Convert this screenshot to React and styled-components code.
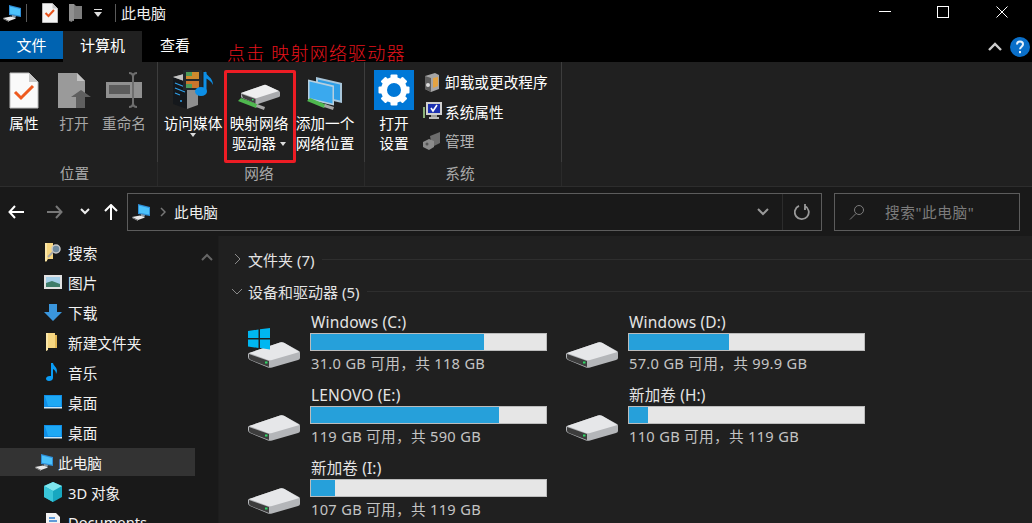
import React from 'react';
import styled, { createGlobalStyle } from 'styled-components';

const GlobalStyle = createGlobalStyle`
  html, body { margin: 0; padding: 0; background: #000; }
  body { font-family: "Noto Sans", "Noto Sans CJK SC", sans-serif; font-size: 14.67px; color: #fff; }
`;

const Window = styled.div`
  position: relative;
  width: 1032px;
  height: 523px;
  overflow: hidden;
  display: flex;
  flex-direction: column;
  background: #000;
`;

const TitleBar = styled.div`
  height: 31px;
  display: flex;
  align-items: flex-start;
  flex: none;
`;

const QuickAccess = styled.div`
  display: flex;
  align-items: center;
  height: 26px;
  padding-left: 2px;
`;

const QuickSep = styled.div`
  width: 1px;
  height: 18px;
  background: #5a5a5a;
  margin: 0 ${p => p.$right}px 0 ${p => p.$left}px;
`;

const QuickSlot = styled.div`
  display: flex;
  margin-right: ${p => p.$right}px;
`;

const WindowTitle = styled.div`
  margin-left: 5px;
  font-size: 15px;
  line-height: 26px;
  color: #eee;
`;

const WindowButtons = styled.div`
  margin-left: auto;
  display: flex;
  padding-right: 1px;
`;

const WindowButton = styled.div`
  width: 58.5px;
  height: 23px;
  display: flex;
  align-items: center;
  justify-content: center;
`;

const TabBar = styled.div`
  height: 31px;
  display: flex;
  flex: none;
  align-items: flex-start;
`;

const FileTab = styled.div`
  width: 63px;
  height: 28px;
  background: #0063b1;
  text-align: center;
  line-height: 28px;
  font-size: 15px;
`;

const Tab = styled.div`
  width: ${p => p.$width}px;
  height: 31px;
  line-height: 29px;
  text-align: center;
  font-size: 15px;
  background: ${p => (p.$active ? '#202020' : 'transparent')};
`;

const TabTools = styled.div`
  margin-left: auto;
  display: flex;
  align-items: center;
  gap: 8px;
  height: 31px;
  padding-right: 2px;
`;

const Ribbon = styled.div`
  height: 124px;
  flex: none;
  display: flex;
  background: #202020;
  border-bottom: 1px solid #2d2d2d;
`;

const RibbonGroup = styled.div`
  width: ${p => p.$width}px;
  display: flex;
  flex-direction: column;
`;

const GroupBody = styled.div`
  height: 100px;
  box-sizing: border-box;
  padding: 8px 0 0 ${p => p.$left}px;
  display: flex;
  gap: ${p => p.$gap}px;
  border-right: 1px solid #3d3d3d;
`;

const GroupLabel = styled.div`
  flex: 1;
  text-align: center;
  font-size: 14.67px;
  line-height: 22px;
  color: #a8a8a8;
  padding-right: ${p => p.$shift}px;
  border-right: 1px solid #2a2a2a;
`;

const BigButton = styled.div`
  width: ${p => p.$width}px;
  display: flex;
  flex-direction: column;
  align-items: center;
  color: ${p => (p.$dim ? '#a6a6a6' : '#fff')};
  line-height: 20px;
  white-space: nowrap;
`;

const IconSlot = styled.div`
  height: 40px;
  flex: none;
  display: flex;
  justify-content: center;
  align-items: ${p => (p.$bottom ? 'flex-end' : 'center')};
`;

const BigLabel = styled.div`
  margin-top: 3px;
  text-align: center;
  font-size: 14.67px;
`;

const Caret = styled.span`
  display: ${p => (p.$block ? 'block' : 'inline-block')};
  width: 0;
  height: 0;
  margin: ${p => (p.$block ? '0 auto' : '0 0 3px 4px')};
  border-left: 3.5px solid transparent;
  border-right: 3.5px solid transparent;
  border-top: 4px solid #ddd;
`;

const SmallColumn = styled.div`
  display: flex;
  flex-direction: column;
  margin-top: -3px;
  margin-left: 9px;
`;

const SmallItem = styled.div`
  height: 29.5px;
  display: flex;
  align-items: center;
  font-size: 14.67px;
  white-space: nowrap;
  color: ${p => (p.$dim ? '#b4b4b4' : '#fff')};
`;

const SmallIcon = styled.div`
  width: 22px;
  display: flex;
  flex: none;
`;

const NavBar = styled.div`
  height: 49px;
  flex: none;
  display: flex;
  align-items: center;
  background: #191919;
`;

const NavButton = styled.div`
  width: ${p => p.$width}px;
  margin: 0 ${p => p.$right || 0}px 0 ${p => p.$left || 0}px;
  display: flex;
  justify-content: center;
`;

const AddressBar = styled.div`
  width: 695px;
  height: 38px;
  box-sizing: border-box;
  border: 1px solid #5c5c5c;
  display: flex;
  align-items: center;
  padding-left: 3px;
  background: #191919;
`;

const AddressChevron = styled.div`
  display: flex;
  margin-left: 9px;
`;

const AddressText = styled.div`
  margin-left: 8px;
  font-size: 14.67px;
  color: #eee;
`;

const AddressDrop = styled.div`
  margin-left: auto;
  width: 38px;
  height: 100%;
  display: flex;
  align-items: center;
  justify-content: center;
  border-right: 1px solid #2c2c2c;
`;

const AddressRefresh = styled.div`
  width: 38px;
  display: flex;
  justify-content: center;
`;

const SearchBox = styled.div`
  width: 186px;
  height: 38px;
  margin-left: 12px;
  box-sizing: border-box;
  border: 1px solid #5c5c5c;
  display: flex;
  align-items: center;
  padding-left: 14px;
  gap: 20px;
  color: #7c7c7c;
  font-size: 14.67px;
  letter-spacing: 0.6px;
`;

const Body = styled.div`
  flex: 1;
  min-height: 0;
  display: flex;
  overflow: hidden;
`;

const Sidebar = styled.div`
  width: 218px;
  flex: none;
  background: #191919;
  display: flex;
  border-right: 1px solid #1d1d1d;
`;

const TreeList = styled.div`
  width: 195px;
  padding-top: 2px;
  display: flex;
  flex-direction: column;
  gap: 2px;
`;

const TreeRow = styled.div`
  height: 28px;
  flex: none;
  display: flex;
  align-items: center;
  gap: ${p => (p.$top ? 4 : 5)}px;
  padding-left: ${p => (p.$top ? 34 : 43)}px;
  background: ${p => (p.$selected ? '#333333' : 'transparent')};
  font-size: 14.67px;
  color: #f2f2f2;
  white-space: nowrap;
  svg { flex: none; }
`;

const ScrollGutter = styled.div`
  flex: 1;
  padding: 9px 0 0 6px;
`;

const Content = styled.div`
  flex: 1;
  background: #202020;
  padding: 7px 0 0 11px;
`;

const SectionHeader = styled.div`
  height: 32px;
  display: flex;
  align-items: center;
  gap: 4px;
  color: #e4e4e4;
  font-size: 15px;
  white-space: nowrap;
`;

const SectionToggle = styled.div`
  width: 14px;
  display: flex;
  justify-content: center;
`;

const SectionRule = styled.div`
  flex: 1;
  height: 1px;
  background: #2e2e2e;
  margin-left: 4px;
`;

const DriveGrid = styled.div`
  margin-left: 18px;
  margin-top: 2px;
  display: grid;
  grid-template-columns: 318px 318px;
  row-gap: 8px;
`;

const DriveTile = styled.div`
  height: 65px;
  display: flex;
  gap: 10px;
  svg { margin-top: 17px; flex: none; }
`;

const DriveInfo = styled.div`
  width: 237px;
`;

const DriveName = styled.div`
  height: 24px;
  line-height: 26px;
  padding-left: 1px;
  color: #e4e4e4;
  font-size: 15.5px;
  letter-spacing: 0.15px;
`;

const UsageBar = styled.div`
  height: 18px;
  box-sizing: border-box;
  border: 1px solid #bcbcbc;
  background: #e6e6e6;
`;

const UsageFill = styled.div`
  height: 100%;
  background: #26a0da;
`;

const DriveSize = styled.div`
  height: 23px;
  line-height: 25px;
  padding-left: 1px;
  color: #c4c4c4;
  font-size: 14.67px;
  letter-spacing: 0.3px;
  white-space: nowrap;
`;

const Callout = styled.div`
  position: absolute;
  left: 227px;
  top: 41px;
  font-size: 18px;
  line-height: 24px;
  letter-spacing: 1.2px;
  color: #e5131c;
  white-space: nowrap;
  font-weight: 300;
`;

const Highlight = styled.div`
  position: absolute;
  left: 224px;
  top: 70px;
  width: 72px;
  height: 93px;
  box-sizing: border-box;
  border: 3px solid #ed1c24;
  border-radius: 2px;
`;

const Chevron = ({ d = 'M1 1l5 5 5-5', color = '#ddd', w = 12, h = 7, sw = 2 }) => (
  <svg width={w} height={h} viewBox={`0 0 ${w} ${h}`}>
    <path d={d} fill="none" stroke={color} strokeWidth={sw} />
  </svg>
);

const ComputerIcon = ({ size = 20 }) => (
  <svg width={size} height={size} viewBox="0 0 20 20">
    <path d="M7 2l12 3v9L7 12z" fill="#2f8fd8" />
    <path d="M8 3.500l10 2.500v6.600L8 10.800z" fill="#4cc2fb" />
    <path d="M10 12l4 1-1 3-3-1z" fill="#8a9aa6" />
    <path d="M1 15l8-1.500 5 2L7 18z" fill="#e8e8e8" />
    <path d="M1 15.200L7 18v1L1 16z" fill="#9a9a9a" />
  </svg>
);

const NoteIcon = () => (
  <svg width="16" height="20" viewBox="0 0 16 20">
    <path d="M.5 .5h10l5 5v14H.5z" fill="#f4f4f4" stroke="#bbb" />
    <path d="M10.500 .5v5h5z" fill="#c8c8c8" />
    <path d="M3.500 10l3 3 5.500-6" fill="none" stroke="#e8531c" strokeWidth="2" />
  </svg>
);

const FolderGreyIcon = () => (
  <svg width="13" height="20" viewBox="0 0 13 20">
    <path d="M0 1h5l2 2h6v13H4l-1 3-3-1z" fill="#7d7d7d" />
    <path d="M0 1h5v17l-5-1z" fill="#909090" />
  </svg>
);

const PropertiesIcon = () => (
  <svg width="30" height="37" viewBox="0 0 30 37">
    <path d="M1 1h19l9 9v26H1z" fill="#fafafa" stroke="#bdbdbd" />
    <path d="M20 1v9h9z" fill="#c9c9c9" />
    <path d="M6 20l6 6 12-12" fill="none" stroke="#ee5a1f" strokeWidth="3" />
  </svg>
);

const OpenIcon = () => (
  <svg width="34" height="37" viewBox="0 0 34 37">
    <path d="M1 1h19l8 8v27H1z" fill="#9a9a9a" />
    <path d="M20 1v8h8z" fill="#c4c4c4" />
    <path d="M14 25L24 18l10 7h-6v11h-9V25z" fill="#5f5f5f" />
  </svg>
);

const RenameIcon = () => (
  <svg width="38" height="36" viewBox="0 0 38 36">
    <rect x="1" y="10" width="36" height="16" fill="#909090" />
    <rect x="4" y="13" width="21" height="9" fill="#5c5c5c" />
    <path d="M24 1c3 0 4 1 4 4v26c0 3-1 4-4 4M32 1c-3 0-4 1-4 4v26c0 3 1 4 4 4" fill="none" stroke="#6e6e6e" strokeWidth="2" />
  </svg>
);

const MediaIcon = () => (
  <svg width="42" height="40" viewBox="0 0 42 40">
    <path d="M1 7l11-3 14 4v27l-11 4z" fill="#8e8e8e" />
    <path d="M1 7l14 5v27L1 34z" fill="#15181c" />
    <path d="M1 7l11-3 14 4-11 4z" fill="#c4c4c4" />
    <path d="M3 13l10 4M3 18l10 4M3 23l5 2" stroke="#2f9fe8" strokeWidth="1.300" />
    <circle cx="9" cy="31" r="1" fill="#2f9fe8" />
    <rect x="11" y="0" width="19" height="20" fill="#23282c" />
    <rect x="14" y="2" width="13" height="7" fill="#cf8a2e" />
    <rect x="14" y="11" width="13" height="7" fill="#c9752c" />
    <path d="M14 2h6v4h-6zM14 14h6v4h-6z" fill="#4d9c5a" />
    <path d="M33 2v19" stroke="#0d8fe6" strokeWidth="3" />
    <ellipse cx="29" cy="21.500" rx="6" ry="4.500" fill="#0d8fe6" />
    <path d="M33 1c1 5 8 6 8 14-2-4-5-6-8-7z" fill="#0d8fe6" />
  </svg>
);

const NetworkDriveIcon = () => (
  <svg width="42" height="26" viewBox="0 0 42 26">
    <path d="M3 9L26 1q1-.5 2 0l13 6q1 .5 1 1.500v3q0 1-1 1.500L20 20q-1 .5-2 0L4 14q-1-.5-1-1.500z" fill="#a9abae" />
    <path d="M3 9L26 1q1-.5 2 0l13 6-22 7q-1 .3-2 0z" fill="#eeeff0" />
    <path d="M3.500 10l14 5v4.500L5 14z" fill="#3f3f3f" />
    <rect x="14" y="15" width="1.500" height="1.500" fill="#3ddc6a" />
    <path d="M0 17l3-3 18 7-3 3z" fill="#4fb84f" />
    <path d="M19 20l8 3-1 3-8-3z" fill="#a6a6a6" />
  </svg>
);

const NetworkPlaceIcon = () => (
  <svg width="36" height="33" viewBox="0 0 36 33">
    <path d="M9 0l26 6v20L9 20z" fill="#a8c6da" />
    <path d="M11 2.500l22 5v16l-22-5z" fill="#2f9fe6" />
    <path d="M1 2.500l26 6v20L1 22.500z" fill="#b6cfdf" />
    <path d="M2.500 4.500l23 5.500v16.500l-23-5.500z" fill="#3aa9ee" />
    <path d="M0 24l3-3 17 7-3 3z" fill="#4fb84f" />
    <path d="M18 27l9 3-1 3-9-3z" fill="#a6a6a6" />
  </svg>
);

const SettingsIcon = () => (
  <svg width="40" height="40" viewBox="0 0 40 40">
    <rect width="40" height="40" fill="#0078d7" />
    <circle cx="20" cy="20" r="10" fill="none" stroke="#fff" strokeWidth="6" />
    {[0, 45, 90, 135, 180, 225, 270, 315].map(a => (
      <rect key={a} x="16.500" y="4.500" width="7" height="6" rx="1" fill="#fff" transform={`rotate(${a} 20 20)`} />
    ))}
  </svg>
);

const UninstallIcon = () => (
  <svg width="18" height="20" viewBox="0 0 18 20">
    <path d="M2 4l10-3 4 2v14l-8 3-6-3z" fill="#a5a5a5" />
    <path d="M2 4l6 2v14l-6-3z" fill="#5e5e5e" />
    <path d="M10 6l5-1v9l-5 2z" fill="#e3a343" />
    <circle cx="5" cy="13" r="2" fill="#ddd" />
  </svg>
);

const SystemIcon = () => (
  <svg width="19" height="18" viewBox="0 0 19 18">
    <rect x="3" y="0" width="16" height="13" fill="#cfcfcf" />
    <rect x="5" y="2" width="12" height="9" fill="#1a2fb0" />
    <path d="M8 6l2 3 4-6" fill="none" stroke="#fff" strokeWidth="1.600" />
    <rect x="8" y="13" width="6" height="2" fill="#999" />
    <rect x="6" y="15" width="10" height="2" fill="#bbb" />
    <rect x="0" y="5" width="2" height="11" fill="#8ab078" />
  </svg>
);

const ManageIcon = () => (
  <svg width="19" height="18" viewBox="0 0 19 18">
    <path d="M7 4l10-4v11l-8 4z" fill="#6d6d6d" />
    <path d="M0 10l6-3 5 2v6l-5 3-6-3z" fill="#8b8b8b" />
    <circle cx="4" cy="12" r="1.500" fill="#555" />
  </svg>
);

const HelpIcon = () => (
  <svg width="20" height="20" viewBox="0 0 20 20">
    <circle cx="10" cy="10" r="10" fill="#0a6fc9" />
    <path d="M7 7.500c0-2 1.300-3 3-3s3 1 3 2.700c0 2.400-3 2.500-3 5" fill="none" stroke="#e8f2fb" strokeWidth="2" />
    <rect x="9" y="14" width="2" height="2.200" fill="#e8f2fb" />
  </svg>
);

const SearchTreeIcon = () => (
  <svg width="20" height="20" viewBox="0 0 20 20">
    <path d="M2 1h8v16H5l-2 3-1-1z" fill="#f6d681" />
    <path d="M2 1h2v18l-2 0z" fill="#fbe6a8" />
    <circle cx="13" cy="7" r="4" fill="#6f8aa0" stroke="#c8c8c8" strokeWidth="1.500" />
    <path d="M10 10l-5 5" stroke="#a8a8a8" strokeWidth="2" />
  </svg>
);

const PictureIcon = () => (
  <svg width="20" height="20" viewBox="0 0 20 20">
    <rect x="1" y="3" width="18" height="14" fill="#e2e2e2" />
    <rect x="3" y="5" width="14" height="10" fill="#a5cfe8" />
    <path d="M3 11l6-2 8 3v3H3z" fill="#3f7d6a" />
  </svg>
);

const DownloadIcon = () => (
  <svg width="20" height="20" viewBox="0 0 20 20">
    <path d="M6 2h8v8h5l-9 9-9-9h5z" fill="#3a96dd" />
  </svg>
);

const FolderIcon = () => (
  <svg width="20" height="20" viewBox="0 0 20 20">
    <path d="M3 1h9v15H5l-2 3z" fill="#f6d681" />
    <path d="M12 3h2v13h-2z" fill="#e2b755" />
    <path d="M3 1h2v17l-2 1z" fill="#fbe6a8" />
  </svg>
);

const MusicIcon = () => (
  <svg width="20" height="20" viewBox="0 0 20 20">
    <path d="M8 1h2c.5 3 4 4 4 8 0 1-.5 2-1 3 0-3-1.500-4-3-5v9c0 2-2 3-4 3s-3-1-3-2.500S5 13.500 8 14z" fill="#0a9cf5" />
  </svg>
);

const DesktopIcon = () => (
  <svg width="20" height="20" viewBox="0 0 20 20">
    <rect x="1" y="3" width="18" height="13" fill="#0f8fe8" />
    <path d="M2 4h16v10H5z" fill="#1fa9f5" />
    <rect x="1" y="15" width="18" height="1.500" fill="#cfe8f8" />
  </svg>
);

const CubeIcon = () => (
  <svg width="20" height="20" viewBox="0 0 20 20">
    <path d="M10 0l9 4v11l-9 5-9-5V4z" fill="#17a7c0" />
    <path d="M10 0l9 4-9 5-9-5z" fill="#7fe6ee" />
    <path d="M1 4l9 5v11l-9-5z" fill="#39c5d8" />
  </svg>
);

const DocIcon = () => (
  <svg width="20" height="20" viewBox="0 0 20 20">
    <path d="M3 1h10l4 4v14H3z" fill="#f2f2f2" />
    <path d="M6 6h6M6 9h8M6 12h8" stroke="#2f7fd0" strokeWidth="1.300" />
  </svg>
);

const DriveIcon = ({ system }) => (
  <svg width="52" height="44" viewBox="0 0 52 44">
    <path d="M1 27L32 16.500q2-.8 4 .2L51 25q1 .6 1 2v5q0 1.500-2 2L24 41.500q-2 .5-4 0L2 34q-2-.8-2-3v-3q0-.6 1-1z" fill="#b4b6b9" />
    <path d="M1 27L32 16.500q2-.8 4 .2L51.500 26 24 34q-2 .5-4 0z" fill="#e6e7e9" />
    <path d="M1 28l20 7v6L3 34q-2-.8-2-2.500z" fill="#3d3d3d" />
    <rect x="17" y="35.500" width="2.500" height="2" fill="#2fd866" />
    {system && (
      <g fill="#00b7f1">
        <path d="M0 5l10.500-1.500v8.500H0z" />
        <path d="M12 3.300L22 2v10H12z" />
        <path d="M0 13.500h10.500V22L0 20.500z" />
        <path d="M12 13.500h10v10L12 22z" />
      </g>
    )}
  </svg>
);

const treeItems = [
  { label: '搜索', Icon: SearchTreeIcon },
  { label: '图片', Icon: PictureIcon },
  { label: '下载', Icon: DownloadIcon },
  { label: '新建文件夹', Icon: FolderIcon },
  { label: '音乐', Icon: MusicIcon },
  { label: '桌面', Icon: DesktopIcon },
  { label: '桌面', Icon: DesktopIcon },
  { label: '此电脑', Icon: ComputerIcon, top: true, selected: true },
  { label: '3D 对象', Icon: CubeIcon },
  { label: 'Documents', Icon: DocIcon },
];

const drives = [
  { name: 'Windows (C:)', size: '31.0 GB 可用，共 118 GB', used: 73.8, system: true },
  { name: 'Windows (D:)', size: '57.0 GB 可用，共 99.9 GB', used: 42.6 },
  { name: 'LENOVO (E:)', size: '119 GB 可用，共 590 GB', used: 79.8 },
  { name: '新加卷 (H:)', size: '110 GB 可用，共 119 GB', used: 8 },
  { name: '新加卷 (I:)', size: '107 GB 可用，共 119 GB', used: 10 },
];

export default function App() {
  return (
    <Window>
      <GlobalStyle />
      <TitleBar>
        <QuickAccess>
          <ComputerIcon />
          <QuickSep $left={4} $right={15} />
          <QuickSlot $right={11}><NoteIcon /></QuickSlot>
          <QuickSlot $right={12}><FolderGreyIcon /></QuickSlot>
          <QuickSlot $right={0}>
            <svg width="8" height="9" viewBox="0 0 8 9">
              <rect x="0" y="0" width="8" height="1" fill="#ddd" />
              <path d="M0 3h8L4 8z" fill="#ddd" />
            </svg>
          </QuickSlot>
          <QuickSep $left={13} $right={0} />
          <WindowTitle>此电脑</WindowTitle>
        </QuickAccess>
        <WindowButtons>
          <WindowButton>
            <svg width="12" height="2" viewBox="0 0 12 2"><rect width="12" height="1" fill="#fff" /></svg>
          </WindowButton>
          <WindowButton>
            <svg width="12" height="12" viewBox="0 0 12 12"><rect x=".5" y=".5" width="11" height="11" fill="none" stroke="#fff" /></svg>
          </WindowButton>
          <WindowButton>
            <svg width="12" height="12" viewBox="0 0 12 12"><path d="M.5 .5l11 11M11.500 .5l-11 11" stroke="#fff" fill="none" /></svg>
          </WindowButton>
        </WindowButtons>
      </TitleBar>

      <TabBar>
        <FileTab>文件</FileTab>
        <Tab $width={79} $active>计算机</Tab>
        <Tab $width={66}>查看</Tab>
        <TabTools>
          <Chevron d="M1 8l6-6 6 6" w={14} h={10} sw={2.4} color="#ccc" />
          <HelpIcon />
        </TabTools>
      </TabBar>

      <Ribbon>
        <RibbonGroup $width={158}>
          <GroupBody $left={0} $gap={2}>
            <BigButton $width={48}><IconSlot><PropertiesIcon /></IconSlot><BigLabel>属性</BigLabel></BigButton>
            <BigButton $width={48} $dim><IconSlot><OpenIcon /></IconSlot><BigLabel>打开</BigLabel></BigButton>
            <BigButton $width={48} $dim><IconSlot><RenameIcon /></IconSlot><BigLabel>重命名</BigLabel></BigButton>
          </GroupBody>
          <GroupLabel $shift={8}>位置</GroupLabel>
        </RibbonGroup>
        <RibbonGroup $width={207}>
          <GroupBody $left={5} $gap={6}>
            <BigButton $width={60}>
              <IconSlot><MediaIcon /></IconSlot>
              <BigLabel>访问媒体<Caret $block /></BigLabel>
            </BigButton>
            <BigButton $width={60}>
              <IconSlot $bottom><NetworkDriveIcon /></IconSlot>
              <BigLabel>映射网络<br />驱动器<Caret /></BigLabel>
            </BigButton>
            <BigButton $width={60}>
              <IconSlot $bottom><NetworkPlaceIcon /></IconSlot>
              <BigLabel>添加一个<br />网络位置</BigLabel>
            </BigButton>
          </GroupBody>
          <GroupLabel $shift={4}>网络</GroupLabel>
        </RibbonGroup>
        <RibbonGroup $width={197}>
          <GroupBody $left={9} $gap={0}>
            <BigButton $width={40}>
              <IconSlot><SettingsIcon /></IconSlot>
              <BigLabel>打开<br />设置</BigLabel>
            </BigButton>
            <SmallColumn>
              <SmallItem><SmallIcon><UninstallIcon /></SmallIcon>卸载或更改程序</SmallItem>
              <SmallItem><SmallIcon><SystemIcon /></SmallIcon>系统属性</SmallItem>
              <SmallItem $dim><SmallIcon><ManageIcon /></SmallIcon>管理</SmallItem>
            </SmallColumn>
          </GroupBody>
          <GroupLabel $shift={6}>系统</GroupLabel>
        </RibbonGroup>
      </Ribbon>

      <NavBar>
        <NavButton $width={32}>
          <svg width="16" height="14" viewBox="0 0 16 14"><path d="M7 1L1.500 7 7 13M2 7h14" fill="none" stroke="#fff" strokeWidth="2" /></svg>
        </NavButton>
        <NavButton $width={46}>
          <svg width="16" height="14" viewBox="0 0 16 14"><path d="M9 1l5.500 6L9 13M14 7H0" fill="none" stroke="#777" strokeWidth="2" /></svg>
        </NavButton>
        <NavButton $width={14}><Chevron d="M1 1l4 4 4-4" w={10} h={7} color="#eee" /></NavButton>
        <NavButton $width={26} $left={6} $right={3}>
          <svg width="14" height="16" viewBox="0 0 14 16"><path d="M1 7l6-6 6 6M7 1v15" fill="none" stroke="#fff" strokeWidth="2" /></svg>
        </NavButton>
        <AddressBar>
          <ComputerIcon />
          <AddressChevron>
            <svg width="6" height="10" viewBox="0 0 6 10"><path d="M1 1l4 4-4 4" fill="none" stroke="#777" strokeWidth="1.500" /></svg>
          </AddressChevron>
          <AddressText>此电脑</AddressText>
          <AddressDrop><Chevron d="M1 1l5 5 5-5" w={12} h={8} color="#999" /></AddressDrop>
          <AddressRefresh>
            <svg width="16" height="18" viewBox="0 0 16 18"><path d="M5 2.800A7 7 0 1 0 11 3M11 1v5h-1" fill="none" stroke="#999" strokeWidth="1.800" /></svg>
          </AddressRefresh>
        </AddressBar>
        <SearchBox>
          <svg width="16" height="16" viewBox="0 0 16 16"><circle cx="10" cy="6" r="4.500" fill="none" stroke="#7c7c7c" /><path d="M7 9.500L1 15.500" stroke="#7c7c7c" /></svg>
          搜索"此电脑"
        </SearchBox>
      </NavBar>

      <Body>
        <Sidebar>
          <TreeList>
            {treeItems.map((item, i) => (
              <TreeRow key={i} $top={item.top} $selected={item.selected}>
                <item.Icon />
                {item.label}
              </TreeRow>
            ))}
          </TreeList>
          <ScrollGutter><Chevron d="M1 7l5-5 5 5" w={12} h={8} color="#666" /></ScrollGutter>
        </Sidebar>
        <Content>
          <SectionHeader>
            <SectionToggle><Chevron d="M1 1l5 5-5 5" w={7} h={12} sw={1} color="#8a8a8a" /></SectionToggle>
            文件夹 (7)
            <SectionRule />
          </SectionHeader>
          <SectionHeader>
            <SectionToggle><Chevron d="M1 1l5 5 5-5" w={12} h={7} sw={1} color="#8a8a8a" /></SectionToggle>
            设备和驱动器 (5)
            <SectionRule />
          </SectionHeader>
          <DriveGrid>
            {drives.map(drive => (
              <DriveTile key={drive.name}>
                <DriveIcon system={drive.system} />
                <DriveInfo>
                  <DriveName>{drive.name}</DriveName>
                  <UsageBar><UsageFill style={{ width: `${drive.used}%` }} /></UsageBar>
                  <DriveSize>{drive.size}</DriveSize>
                </DriveInfo>
              </DriveTile>
            ))}
          </DriveGrid>
        </Content>
      </Body>

      <Callout>点击 映射网络驱动器</Callout>
      <Highlight />
    </Window>
  );
}
